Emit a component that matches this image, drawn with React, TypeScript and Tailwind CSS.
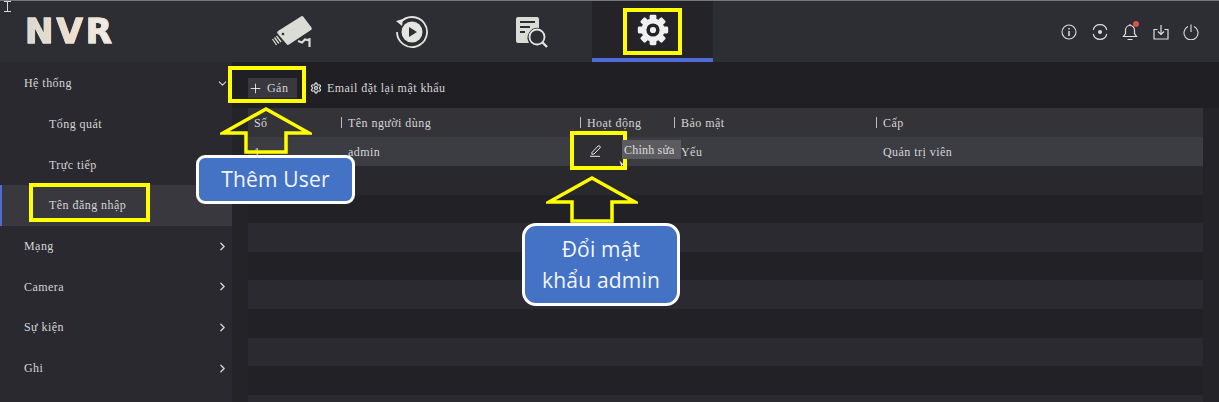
import React from "react";
import { ChevronDown, ChevronRight, Plus, Settings } from "lucide-react";

const serif = "font-['Liberation_Serif',serif] tracking-[0.45px]";

const sideItems = [
  { label: "Hệ thống", level: 0, open: true },
  { label: "Tổng quát", level: 1 },
  { label: "Trực tiếp", level: 1 },
  { label: "Tên đăng nhập", level: 1, active: true },
  { label: "Mạng", level: 0 },
  { label: "Camera", level: 0 },
  { label: "Sự kiện", level: 0 },
  { label: "Ghi", level: 0 },
];

const CameraIcon = () => (
  <svg width="42" height="34" viewBox="0 0 42 34" fill="none">
    <path d="M30 1.5 Q31.5 0.5 32.5 2 L40.5 12.5 Q41.5 14 40 15 L18 29.5 Q16.5 30.5 15.5 29 L6.5 18.5 Q5.5 17 7 16 Z" fill="#dcdcd6" />
    <circle cx="12" cy="19" r="1.3" fill="#2d2d34" />
    <path d="M1.5 24 L5.5 30 M3.5 22.5 L7.8 28.5 M5.5 21 L10 27" stroke="#dcdcd6" strokeWidth="1.3" />
    <path d="M27 26 L31 27.5 L34 24.5 L38.5 25.5 M38.5 23 V32" stroke="#dcdcd6" strokeWidth="2.2" />
  </svg>
);

const ReplayIcon = () => (
  <svg width="34" height="34" viewBox="0 0 34 34" fill="none">
    <path d="M5 8 A15 15 0 1 1 2 17" stroke="#e4e4e0" strokeWidth="1.8" />
    <path d="M1 6 L7 11 L8 4 Z" fill="#e4e4e0" />
    <circle cx="17" cy="17" r="10.5" fill="#e4e4e0" />
    <path d="M14 12 L22 17 L14 22 Z" fill="#2d2d34" />
  </svg>
);

const SearchDocIcon = () => (
  <svg width="34" height="32" viewBox="0 0 34 32" fill="none">
    <path d="M1 3 Q1 1 3 1 L22 1 Q24 1 24 3 L24 12 A10 10 0 0 0 14 27 L3 27 Q1 27 1 25 Z" fill="#dcdcd6" />
    <path d="M5 6 H20 M5 11 H15 M5 16 H10" stroke="#2d2d34" strokeWidth="2" />
    <circle cx="22" cy="21" r="7.5" stroke="#e4e4e0" strokeWidth="1.8" />
    <path d="M27.5 26.5 L32 31" stroke="#e4e4e0" strokeWidth="2.4" />
  </svg>
);

const GearIcon = () => (
  <svg width="32" height="32" viewBox="0 0 32 32">
    <circle cx="16" cy="16" r="11.5" fill="#f0f0f0" />
    {[0, 45, 90, 135, 180, 225, 270, 315].map((a) => (
      <rect key={a} x="12.6" y="0.8" width="6.8" height="7" rx="1.4" fill="#f0f0f0" transform={`rotate(${a} 16 16)`} />
    ))}
    <circle cx="16" cy="16" r="6.6" fill="#232328" />
    <circle cx="16" cy="16" r="3.1" fill="#f0f0f0" />
  </svg>
);

const PencilIcon = () => (
  <svg width="13" height="13" viewBox="0 0 13 13" fill="none" stroke="#e8e8e8" strokeWidth="1">
    <path d="M3 8.5 L9 2 Q10 1.3 11 2.3 Q11.8 3.2 11 4 L5 10 L2.8 10.3 Z M1 12.3 H11" />
  </svg>
);

const topIcons = [
  <svg key="i" width="16" height="16" viewBox="0 0 16 16" fill="none" stroke="#dedede" strokeWidth="1.1">
    <circle cx="8" cy="8" r="7" />
    <path d="M8 7 V12 M8 4 V5.4" strokeWidth="1.5" />
  </svg>,
  <svg key="r" width="16" height="16" viewBox="0 0 16 16" fill="none" stroke="#dedede" strokeWidth="1.1">
    <path d="M1.2 6 A7 7 0 0 1 14.8 6 M14.8 10 A7 7 0 0 1 1.2 10" />
    <circle cx="8" cy="8" r="2" fill="#dedede" stroke="none" />
  </svg>,
  <span key="b" className="relative flex">
    <svg width="16" height="18" viewBox="0 0 16 18" fill="none" stroke="#dedede" strokeWidth="1.2">
      <path d="M1.5 13.5 H14.5 L12.5 10.5 V7 A4.5 4.5 0 0 0 3.5 7 V10.5 Z M5.5 16.5 H10.5 M8 2.5 V1" />
    </svg>
    <span className="absolute right-[-1px] top-[-2px] h-[6px] w-[6px] rounded-full bg-[#d9534f]" />
  </span>,
  <svg key="d" width="16" height="16" viewBox="0 0 16 16" fill="none" stroke="#dedede" strokeWidth="1.2">
    <path d="M8 1 V10 M5 7.5 L8 10.5 L11 7.5 M4.5 5.5 H1 V15 H15 V5.5 H11.5" />
  </svg>,
  <svg key="p" width="16" height="16" viewBox="0 0 16 16" fill="none" stroke="#dedede" strokeWidth="1.1">
    <path d="M5 2.6 A7 7 0 1 0 11 2.6 M8 0.5 V8" />
  </svg>,
];

const Arrow = ({ className }: { className: string }) => (
  <svg className={className} width="92" height="47" viewBox="0 0 92 47" fill="none">
    <path d="M46 2 L89 26 H66 V45 H26 V26 H3 Z" stroke="#ffff00" strokeWidth="3.5" />
  </svg>
);

const YellowBox = ({ className }: { className: string }) => (
  <div className={`absolute border-[4px] border-[#ffff00] ${className}`} />
);

const HeadCell = ({ label, first }: { label: string; first?: boolean }) => (
  <div className={`flex items-center ${first ? "pl-[6px]" : ""}`}>
    {!first && <span className="mr-[6px] h-[11px] w-px bg-[#bdbdbd]" />}
    {label}
  </div>
);

const columns = "grid grid-cols-[93px_239px_94px_202px_1fr]";

export default function App() {
  return (
    <div className={`relative h-[402px] w-[1219px] overflow-hidden bg-[#232328] text-[12px] text-[#d6d6d6] ${serif}`}>
      {/* Thanh trên */}
      <header className="flex h-[62px] border-t border-[#77777a] bg-[#2d2d34]">
        <div className="flex w-[232px] items-center pl-[25px]">
          <span className="bg-gradient-to-r from-[#d8d8d0] via-[#eedfca] to-[#f0f0ec] bg-clip-text font-['DejaVu_Sans',sans-serif] text-[34px] font-bold tracking-[3px] text-transparent [-webkit-text-stroke:1px_#e6e2da]">
            NVR
          </span>
        </div>
        <div className="flex items-center">
          <div className="flex h-full w-[120px] items-center justify-center"><CameraIcon /></div>
          <div className="flex h-full w-[120px] items-center justify-center"><ReplayIcon /></div>
          <div className="flex h-full w-[120px] items-center justify-center"><SearchDocIcon /></div>
          <div className="flex h-full w-[121px] items-center justify-center border-b-[4px] border-[#4f6bd8] bg-[#232328]"><GearIcon /></div>
        </div>
        <div className="ml-auto flex items-center gap-[14.5px] pr-[20px]">{topIcons}</div>
      </header>

      <div className="flex h-[340px]">
        {/* Menu trái */}
        <aside className="w-[232px] bg-[#29292f] pt-[1px]">
          {sideItems.map((item) => (
            <div
              key={item.label}
              className={`flex h-[40.7px] items-center justify-between pr-[3px] ${item.level ? "pl-[49px]" : "pl-[24px]"} ${
                item.active ? "border-l-2 border-[#4f6bd8] bg-[#38383e] !pl-[47px]" : ""
              }`}
            >
              <span>{item.label}</span>
              {item.level === 0 &&
                (item.open ? (
                  <ChevronDown size={13} strokeWidth={2} className="text-[#d6d6d6]" />
                ) : (
                  <ChevronRight size={13} strokeWidth={2.5} className="text-[#d6d6d6]" />
                ))}
            </div>
          ))}
        </aside>

        {/* Nội dung */}
        <main className="flex-1">
          <div className="flex h-[46px] items-center bg-[#1f1f24] pl-[16px] pt-[6px]">
            <button className="flex h-[20px] w-[49px] items-center gap-[4px] bg-[#38383e]">
              <Plus size={15} strokeWidth={1.4} className="text-[#f0f0f0]" />
              Gán
            </button>
            <Settings className="ml-[13px] mr-[5px]" size={12} strokeWidth={2.6} />
            <span>Email đặt lại mật khẩu</span>
          </div>

          <div className="ml-[16px] mr-[16px]">
            <div className={`${columns} h-[29px] bg-[#333338]`}>
              <HeadCell first label="Số" />
              <HeadCell label="Tên người dùng" />
              <HeadCell label="Hoạt động" />
              <HeadCell label="Bảo mật" />
              <HeadCell label="Cấp" />
            </div>
            <div className={`${columns} h-[29px] items-center bg-[#3c3c43]`}>
              <div className="pl-[6px]">1</div>
              <div className="pl-[7px]">admin</div>
              <div className="pl-[8px]"><PencilIcon /></div>
              <div className="pl-[7px]">Yếu</div>
              <div className="pl-[7px]">Quản trị viên</div>
            </div>
            {["bg-[#28282d]", "bg-[#222226]", "bg-[#2a2a30]", "bg-[#222226]", "bg-[#2a2a30]", "bg-[#222226]", "bg-[#2a2a30]", "bg-[#222226]"].map((bg, i) => (
              <div key={i} className={`h-[28.6px] ${bg}`} />
            ))}
            <div className="h-[8px] bg-[#2a2a30]" />
          </div>
        </main>
      </div>

      {/* Chú thích đè lên giao diện */}
      <YellowBox className="left-[623px] top-[8px] h-[47px] w-[59px]" />
      <YellowBox className="left-[228px] top-[66px] h-[37px] w-[78px]" />
      <YellowBox className="left-[29px] top-[183px] h-[39px] w-[121px]" />
      <div className="absolute left-[570px] top-[131px] flex h-[39px] w-[57px] items-center justify-center border-[4px] border-[#ffff00] bg-[#2e2e33] pr-[7px]">
        <PencilIcon />
      </div>
      <div className="absolute left-[622px] top-[140px] flex h-[19px] w-[59px] items-center bg-[#5c5c60] pl-[2px] tracking-[0.2px] text-[#dcdcdc]">
        Chỉnh sửa
      </div>
      <Arrow className="absolute left-[220px] top-[107px]" />
      <Arrow className="absolute left-[546px] top-[176px]" />
      <div className="absolute left-[196px] top-[155px] flex h-[49px] w-[159px] items-center justify-center rounded-[9px] border-[3px] border-white bg-[#4472c4] font-['Open_Sans',sans-serif] text-[21px] tracking-[0.2px] text-[#f2f6fc]">
        Thêm User
      </div>
      <div className="absolute left-[522px] top-[223px] flex h-[83px] w-[158px] flex-col items-center justify-center rounded-[14px] border-[3px] border-white bg-[#4472c4] font-['Open_Sans',sans-serif] text-[21px] leading-[31px] tracking-[0.2px] text-[#f2f6fc]">
        <span>Đổi mật</span>
        <span>khẩu admin</span>
      </div>

      {/* Con trỏ chuột */}
      <svg className="absolute left-[3px] top-[1px]" width="9" height="11" viewBox="0 0 9 11" fill="none" stroke="#d8d8d8" strokeWidth="1">
        <path d="M1 0.5 H8 M4.5 0.5 V10.5 M1 10.5 H8" />
      </svg>
      <svg className="absolute left-[619px] top-[160px]" width="6" height="9" viewBox="0 0 6 9">
        <path d="M0.5 0.5 L5 5 L3 5 L3 8.5 Z" fill="#e8e8e8" />
      </svg>
    </div>
  );
}
